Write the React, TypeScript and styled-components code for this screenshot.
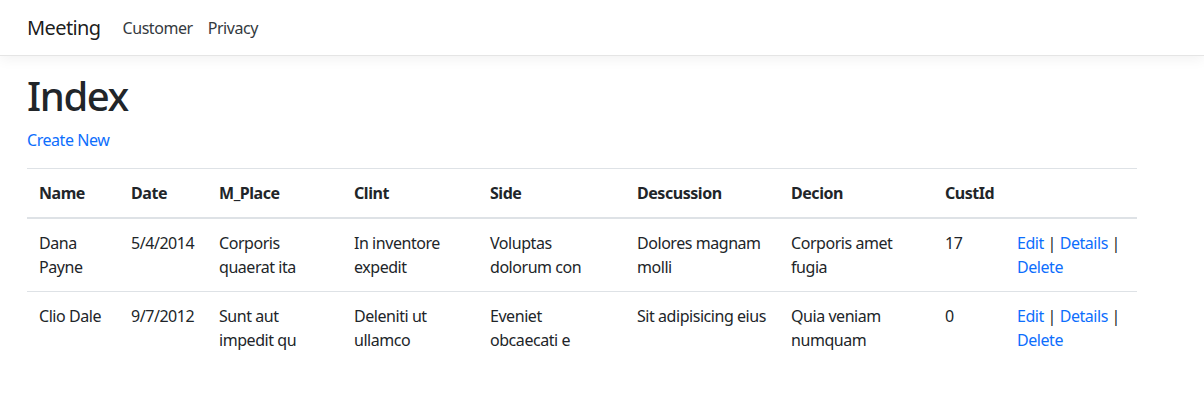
import styled, { createGlobalStyle } from 'styled-components';

const GlobalStyle = createGlobalStyle`
  html, body {
    margin: 0;
    padding: 0;
    background: #fff;
  }
  body {
    font-family: "Segoe UI", "Noto Sans", "Liberation Sans", sans-serif;
    font-size: 16px;
    line-height: 1.5;
    letter-spacing: -0.45px;
    color: #212529;
  }
  * {
    box-sizing: border-box;
  }
`;

const Navbar = styled.header`
  display: flex;
  align-items: center;
  height: 56px;
  padding: 0 27px;
  background: #fff;
  border-bottom: 1px solid #e5e5e5;
  box-shadow: 0 4px 12px rgba(0, 0, 0, 0.05);
  margin-bottom: 16px;
`;

const Brand = styled.a`
  font-size: 20px;
  letter-spacing: -0.6px;
  color: rgba(0, 0, 0, 0.9);
  text-decoration: none;
  margin-right: 15px;
`;

const NavList = styled.nav`
  display: flex;
  gap: 1px;
`;

const NavLink = styled.a`
  color: #343a40;
  text-decoration: none;
  padding: 8px 7px;
`;

const Main = styled.main`
  padding: 0 0 16px 27px;
  width: 1137px;
`;

const Title = styled.h1`
  font-size: 40px;
  font-weight: 500;
  line-height: 1.2;
  letter-spacing: -1.4px;
  margin: 0 0 8px;
`;

const Link = styled.a`
  color: #0d6efd;
  text-decoration: none;
`;

const Para = styled.p`
  margin: 0 0 16px;
`;

const Table = styled.table`
  width: 100%;
  border-collapse: collapse;
  table-layout: fixed;
`;

const Th = styled.th<{ $w: number }>`
  text-align: left;
  font-weight: 700;
  padding: 12px;
  vertical-align: bottom;
  border-top: 1px solid #dee2e6;
  border-bottom: 2px solid #dee2e6;
  width: ${({ $w }) => $w}px;
`;

const Td = styled.td`
  padding: 12px;
  vertical-align: top;
  border-top: 1px solid #dee2e6;
`;

const Sep = styled.span`
  color: #212529;
`;

const columns: [string, number][] = [
  ['Name', 92],
  ['Date', 88],
  ['M_Place', 135],
  ['Clint', 136],
  ['Side', 147],
  ['Descussion', 154],
  ['Decion', 154],
  ['CustId', 72],
  ['', 132],
];

const rows = [
  ['Dana Payne', '5/4/2014', 'Corporis quaerat ita', 'In inventore expedit', 'Voluptas dolorum con', 'Dolores magnam molli', 'Corporis amet fugia', '17'],
  ['Clio Dale', '9/7/2012', 'Sunt aut impedit qu', 'Deleniti ut ullamco', 'Eveniet obcaecati e', 'Sit adipisicing eius', 'Quia veniam numquam', '0'],
];

const App = () => (
  <>
    <GlobalStyle />
    <Navbar>
      <Brand href="#">Meeting</Brand>
      <NavList>
        <NavLink href="#">Customer</NavLink>
        <NavLink href="#">Privacy</NavLink>
      </NavList>
    </Navbar>
    <Main>
      <Title>Index</Title>
      <Para>
        <Link href="#">Create New</Link>
      </Para>
      <Table>
        <thead>
          <tr>
            {columns.map(([label, w], i) => (
              <Th key={i} $w={w}>{label}</Th>
            ))}
          </tr>
        </thead>
        <tbody>
          {rows.map((row) => (
            <tr key={row[0]}>
              {row.map((cell, i) => (
                <Td key={i}>{cell}</Td>
              ))}
              <Td>
                <Link href="#">Edit</Link> <Sep>|</Sep> <Link href="#">Details</Link> <Sep>|</Sep>{' '}
                <Link href="#">Delete</Link>
              </Td>
            </tr>
          ))}
        </tbody>
      </Table>
    </Main>
  </>
);

export default App;
